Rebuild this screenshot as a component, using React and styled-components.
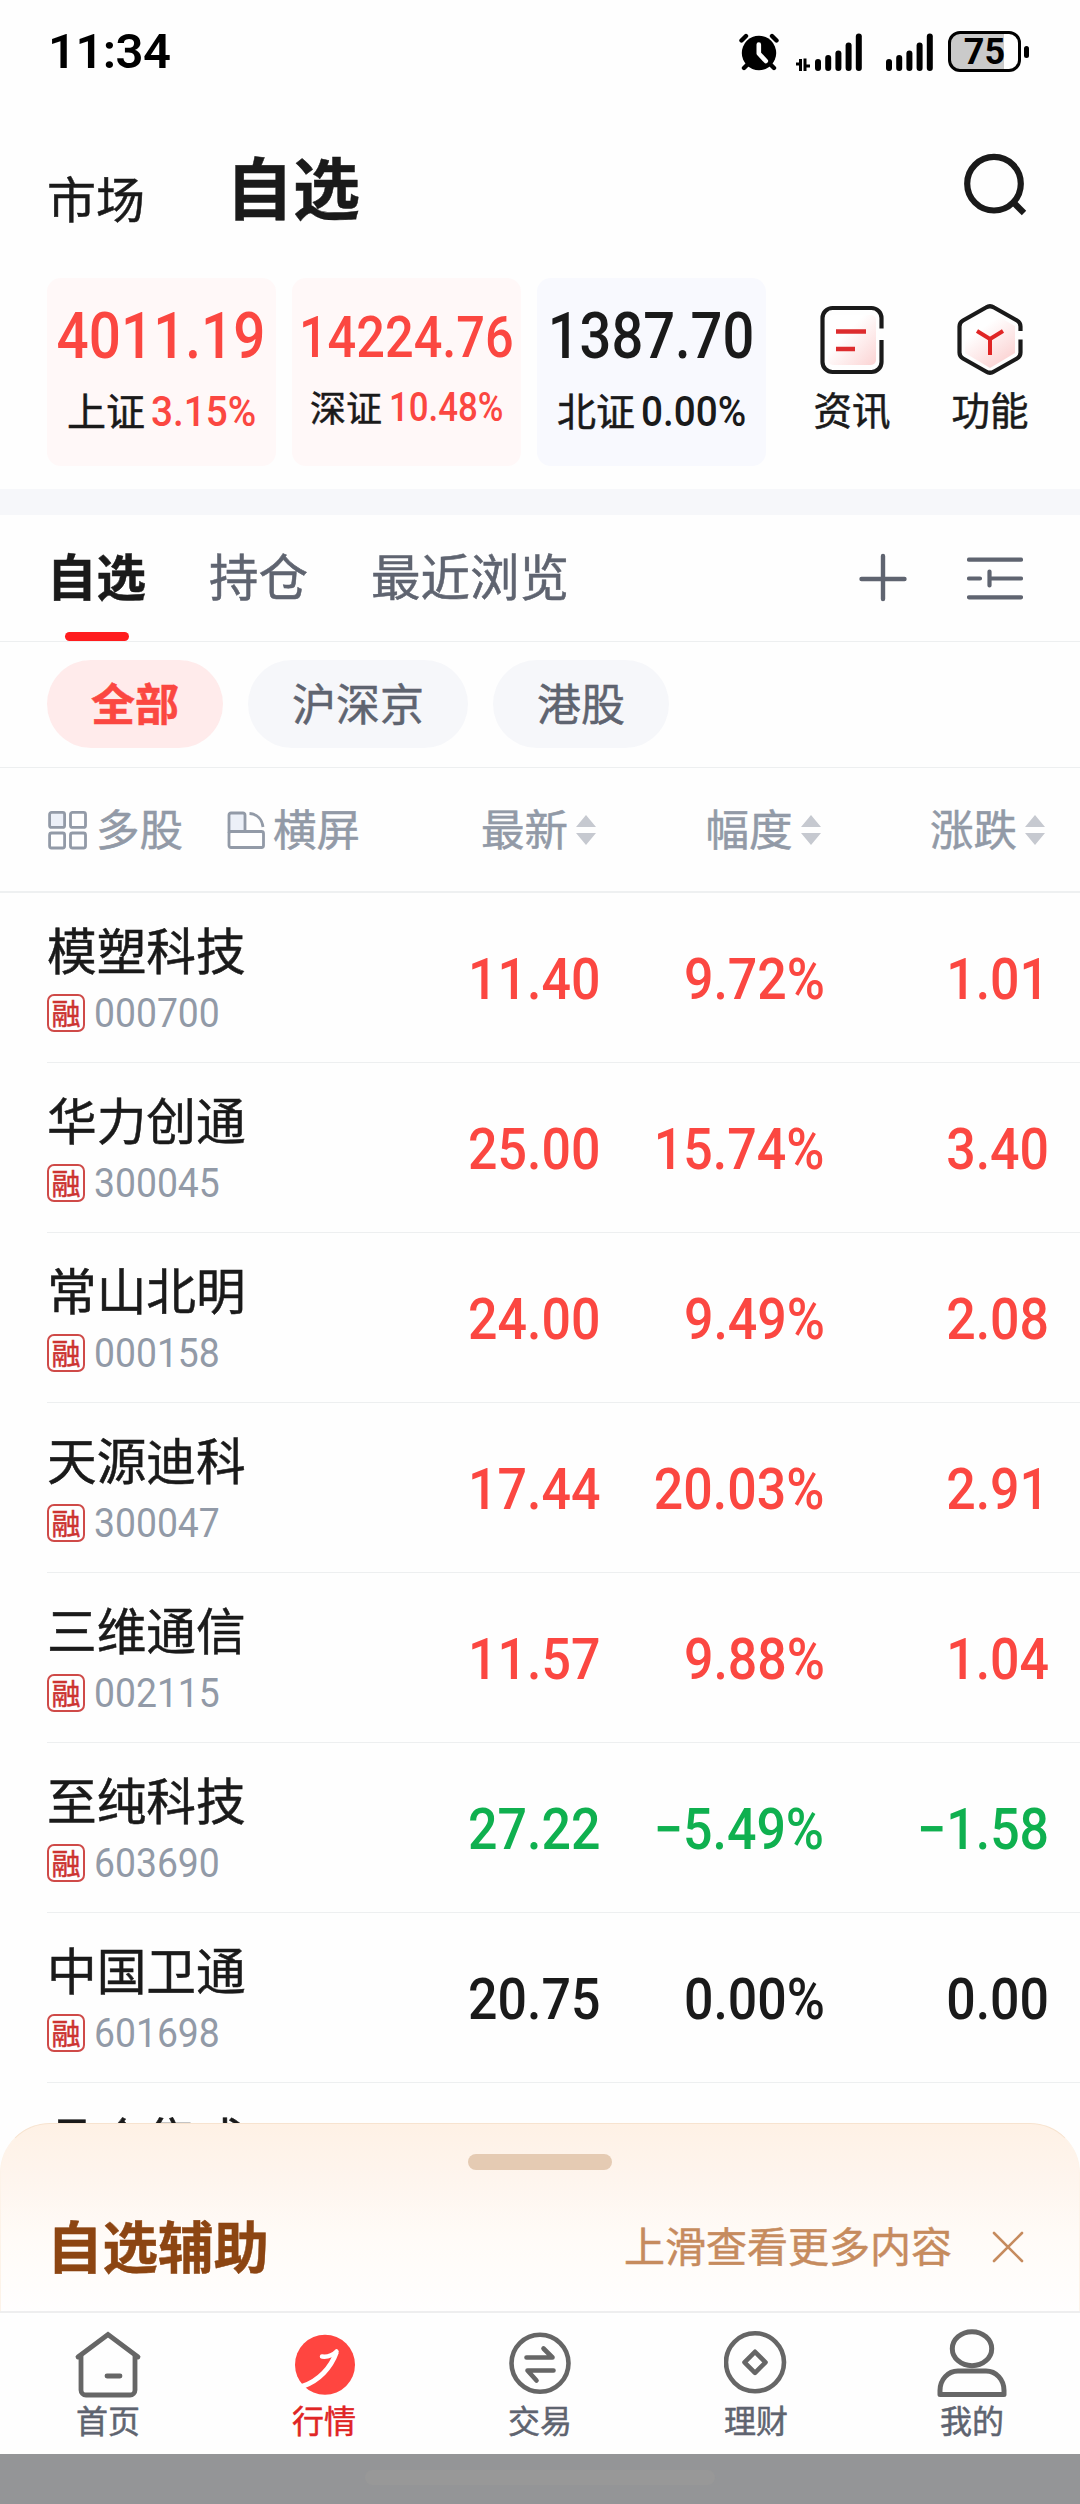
import React, { useState } from 'react';
import styled, { createGlobalStyle, css } from 'styled-components';

const GlobalStyle = createGlobalStyle`
  * {
    box-sizing: border-box;
  }

  body {
    margin: 0;
    background: #fefefe;
    font-family: Roboto, 'Noto Sans CJK SC', sans-serif;
  }

  svg {
    display: block;
    flex: none;
  }
`;

const colors = {
  ink: '#1a1a1a',
  text: '#5f6470',
  muted: '#929aa7',
  line: '#edeff0',
  up: '#fb4741',
  down: '#0fb04f',
  flat: '#1a1a1a',
  red: '#e02525',
  icon: '#666666',
};

const Screen = styled.div`
  display: flex;
  flex-direction: column;
  width: 1080px;
  height: 2504px;
  overflow: hidden;
  background: #fefefe;
  color: ${colors.ink};
`;

// Narrow numerals: the glyphs are squeezed from one side of the box
const Figure = styled.span`
  display: inline-block;
  font-family: Roboto, sans-serif;
  font-size: ${({ $size }) => $size}px;
  font-weight: ${({ $weight }) => $weight || 500};
  line-height: 1;
  white-space: nowrap;
  color: ${({ $color }) => $color || 'inherit'};
  transform: scaleX(${({ $squeeze }) => $squeeze || 0.91});
  transform-origin: ${({ $origin }) => $origin || 'left'} center;
`;

// CJK glyphs sit low in a line-height of 1, so lift them a little
const Cjk = styled.span`
  font-family: 'Noto Sans CJK SC', sans-serif;
  line-height: 1;
  white-space: nowrap;
  transform: translateY(-0.045em);
  -webkit-text-stroke: 0.5px currentColor;
`;

/* ---------- status bar ---------- */

const StatusBar = styled.div`
  display: flex;
  align-items: flex-start;
  height: 104px;
  padding: 0 51px 0 48px;
  color: #000;
`;

const Clock = styled.span`
  flex: 1;
  padding-top: 27px;
  font-size: 49px;
  font-weight: 600;
  line-height: 1;
  letter-spacing: -0.6px;
`;

const StatusIcons = styled.div`
  display: flex;
  padding-top: 31px;
`;

const SignalGap = styled.div`
  width: ${({ $wide }) => ($wide ? 24 : 16)}px;
`;

const Battery = styled.div`
  display: flex;
  align-items: center;
  margin-left: 15px;
`;

const BatteryCase = styled.div`
  display: flex;
  align-items: center;
  justify-content: center;
  width: 73px;
  height: 41px;
  border: 3px solid #000;
  border-radius: 12px;
  background: linear-gradient(90deg, #cacaca 53px, #fefefe 53px);
  font-size: 36px;
  font-weight: 700;
  line-height: 1;
`;

const BatteryTip = styled.div`
  width: 5px;
  height: 12px;
  margin-left: 3px;
  border-radius: 3px;
  background: #000;
`;

/* ---------- page header ---------- */

const PageHeader = styled.header`
  display: flex;
  align-items: flex-start;
  height: 174px;
  padding: 0 50px 0 47px;
`;

const PageTab = styled(Cjk)`
  font-size: ${({ $active }) => ($active ? 67 : 49)}px;
  font-weight: ${({ $active }) => ($active ? 700 : 400)};
  margin-top: ${({ $active }) => ($active ? 50 : 70)}px;
  margin-right: ${({ $active }) => ($active ? 'auto' : '81px')};
`;

const SearchButton = styled.div`
  padding-top: 48px;
`;

/* ---------- indices ---------- */

const IndexStrip = styled.section`
  display: flex;
  height: 211px;
  padding-left: 47px;
`;

const IndexCard = styled.div`
  display: flex;
  flex-direction: column;
  align-items: center;
  width: 229px;
  height: 188px;
  margin-right: 16px;
  border-radius: 14px;
  background: ${({ $tone }) => ($tone === 'up' ? '#fff8f8' : '#f8f9fe')};
`;

const IndexValue = styled.div`
  display: flex;
  justify-content: center;
  align-items: center;
  height: 60px;
  width: 100%;
  margin-top: 29px;
`;

const IndexMeta = styled.div`
  display: flex;
  justify-content: flex-start;
  align-items: center;
  height: 44px;
  width: 100%;
  margin-top: ${({ $compact }) => ($compact ? 19 : 22)}px;
  padding-left: ${({ $compact }) => ($compact ? 18 : 20)}px;
  font-size: ${({ $compact }) => ($compact ? 36 : 39)}px;
  gap: ${({ $compact }) => ($compact ? 7 : 6)}px;
`;

const Shortcut = styled.div`
  display: flex;
  flex-direction: column;
  align-items: center;
  width: 78px;
  margin-left: ${({ $first }) => ($first ? 31 : 60)}px;
  padding-top: 25px;
  font-size: 38.5px;

  span {
    margin-top: 16px;
  }
`;

const Band = styled.div`
  height: 26px;
  background: #f6f7fa;
`;

/* ---------- watchlist tabs and filters ---------- */

const TabBar = styled.nav`
  display: flex;
  align-items: flex-start;
  height: 127px;
  padding: 0 57px 0 47px;
  border-bottom: 1px solid ${colors.line};
`;

const Tab = styled.div`
  display: flex;
  flex-direction: column;
  align-items: center;
  height: 126px;
  margin-right: 63px;
  padding-top: 37px;
  font-size: 49.5px;
  font-weight: ${({ $active }) => ($active ? 700 : 400)};
  color: ${({ $active }) => ($active ? colors.ink : colors.text)};

  &::after {
    content: '';
    width: 64px;
    height: 9px;
    margin-top: auto;
    border-radius: 5px;
    background: ${({ $active }) => ($active ? '#ff1c1e' : 'transparent')};
  }
`;

const TabTools = styled.div`
  display: flex;
  gap: 60px;
  margin-left: auto;
  padding-top: 38px;
`;

const FilterBar = styled.div`
  display: flex;
  gap: 25px;
  height: 126px;
  padding: 18px 47px 0;
  border-bottom: 1px solid ${colors.line};
`;

const Pill = styled.div`
  display: flex;
  align-items: center;
  height: 88px;
  padding: 0 44px;
  border-radius: 44px;
  font-size: 44px;
  background: #f6f7fa;
  color: ${colors.text};

  ${({ $active }) => $active && css`
    background: #ffebeb;
    color: ${colors.up};
    font-weight: 700;
  `}
`;

/* ---------- quote table ---------- */

const TableHead = styled.div`
  display: flex;
  justify-content: space-between;
  align-items: center;
  height: 125px;
  padding: 0 35px 0 47px;
  border-bottom: 2px solid #eef0f1;
  font-size: 43.5px;
  color: ${colors.muted};
`;

const ViewModes = styled.div`
  display: flex;
  gap: 43px;
`;

const ViewMode = styled.div`
  display: flex;
  align-items: center;
  gap: 7px;
`;

const SortHeads = styled.div`
  display: grid;
  grid-template-columns: repeat(3, 224.5px);
  margin-left: -224px;
`;

const SortHead = styled.div`
  display: flex;
  justify-content: flex-end;
  align-items: center;
  gap: 8px;
`;

const QuoteList = styled.div`
  height: 1290px;
  overflow: hidden;
`;

const QuoteRow = styled.div`
  display: grid;
  grid-template-columns: 1fr repeat(3, 224.5px);
  height: 170px;
  margin-left: 47px;
  padding-right: 31px;
  border-bottom: 1px solid ${colors.line};
`;

const Stock = styled.div`
  display: flex;
  flex-direction: column;
  padding-top: 33px;
  font-size: 49.7px;
`;

const StockMeta = styled.div`
  display: flex;
  align-items: center;
  gap: 9px;
  margin-top: 17px;
  color: ${colors.muted};
`;

const MarginBadge = styled.div`
  display: flex;
  align-items: center;
  justify-content: center;
  width: 38px;
  height: 38px;
  border: 2px solid #cf4a48;
  border-radius: 7px;
  font-size: 29px;
  color: #cc3330;
`;

const Cell = styled.div`
  padding-top: 58px;
  text-align: right;
  color: ${({ $trend }) => colors[$trend]};
`;

/* ---------- bottom sheet ---------- */

const Sheet = styled.section`
  position: relative;
  display: flex;
  flex-direction: column;
  align-items: center;
  height: 188px;
  margin-top: -60px;
  border: 1px solid #fdf3e9;
  border-top-color: #f7e3cf;
  border-bottom: 0;
  border-radius: 50px 50px 0 0;
  background: linear-gradient(#fef1e5, #fef5ee 30%, #fffbf7 60%, #fffefe);
`;

const Handle = styled.div`
  width: 144px;
  height: 16px;
  margin-top: 30px;
  border-radius: 8px;
  background: #e5cbb3;
`;

const SheetRow = styled.div`
  display: flex;
  align-items: center;
  width: 100%;
  margin-top: 49px;
  padding: 0 55px 0 46px;
`;

const SheetTitle = styled(Cjk)`
  font-size: 55.5px;
  font-weight: 700;
  color: #8c4512;
`;

const SheetHint = styled(Cjk)`
  margin-left: auto;
  margin-right: 40px;
  font-size: 41px;
  color: #c68b5e;
`;

/* ---------- navigation ---------- */

const NavBar = styled.nav`
  position: relative;
  display: grid;
  grid-template-columns: repeat(5, 1fr);
  height: 143px;
  border-top: 2px solid #eeeeef;
  background: #fefefe;
`;

const NavItem = styled.div`
  display: flex;
  flex-direction: column;
  align-items: center;
  padding-top: 15px;
  font-size: 32px;
  color: ${({ $active }) => ($active ? colors.red : colors.text)};

  span {
    margin-top: 6px;
  }
`;

const GestureBar = styled.div`
  display: flex;
  justify-content: center;
  height: 50px;
  padding-top: 16px;
  background: #949597;

  &::after {
    content: '';
    width: 350px;
    height: 15px;
    border-radius: 8px;
    background: #989898;
  }
`;

/* ---------- icons ---------- */

const AlarmIcon = () => (
  <svg width="40" height="41" viewBox="0 0 40 41" fill="none" strokeLinecap="round">
    <circle cx="20" cy="22" r="17.2" fill="#000" />
    <path d="M2.5 9.5 7 5M37.5 9.5 33 5" stroke="#000" strokeWidth="4.4" />
    <path d="m9 33-4 4M31 33l4 4" stroke="#000" strokeWidth="4.4" />
    <path d="M19.8 13.5v9l7 7.5" stroke="#fff" strokeWidth="4.6" strokeLinejoin="round" />
  </svg>
);

const BAR_TOPS = [28, 24, 19.5, 11.5, 2.5];

const SignalIcon = ({ data }) => (
  <svg width={data ? 67 : 47} height="41" viewBox={data ? '-20 0 67 41' : '0 0 47 41'}>
    {BAR_TOPS.map((top, i) => (
      <rect key={top} x={i * 10.2} y={top} width="6" height={40 - top} rx="3" />
    ))}
    {data && (
      <path
        d="M-19 33h4.500M-14.500 28v12M-10 27.500V40M-10 35h5"
        fill="none"
        stroke="#000"
        strokeWidth="3"
      />
    )}
  </svg>
);

const SearchIcon = () => (
  <svg width="66" height="66" viewBox="0 0 66 66" fill="none" stroke={colors.ink} strokeWidth="6.2">
    <circle cx="30" cy="31.7" r="26.8" />
    <path d="m49.5 50.5 10.5 10.5" />
  </svg>
);

const NewsIcon = () => (
  <svg width="64" height="72" viewBox="0 0 64 72" fill="none">
    <defs>
      <linearGradient id="newsFill" x1="0.3" y1="0.3" x2="1" y2="1">
        <stop offset="0.1" stopColor="#fff" />
        <stop offset="1" stopColor="#fbd3d3" />
      </linearGradient>
    </defs>
    <rect x="8" y="12" width="48" height="50" rx="5" fill="url(#newsFill)" />
    <path
      d="M61.5 25.5V15a10 10 0 0 0-10-10h-39a10 10 0 0 0-10 10v44a10 10 0 0 0 10 10h39a10 10 0 0 0 10-10V37"
      stroke={colors.ink}
      strokeWidth="4.2"
    />
    <path d="M16 28.5h30M16 46h19" stroke="#dd2c2e" strokeWidth="4.6" />
  </svg>
);

const FeatureIcon = () => (
  <svg width="68" height="72" viewBox="0 0 68 72" fill="none" strokeLinejoin="round">
    <defs>
      <linearGradient id="featureFill" x1="0.3" y1="0.2" x2="0.8" y2="1">
        <stop offset="0.1" stopColor="#fff" />
        <stop offset="1" stopColor="#fbcfcf" />
      </linearGradient>
    </defs>
    <path d="M34 9 59 23v27L34 65 9 50V23Z" fill="url(#featureFill)" />
    <path
      d="M64.5 28v-4.5q0-4-3.5-6L38 4.500q-4-2.500-8 0L7 17.500q-3.500 2-3.500 6v26q0 4 3.500 6l23 13q4 2.500 8 0l23-13q3.500-2 3.500-6V36.500"
      stroke={colors.ink}
      strokeWidth="4.2"
    />
    <path d="m21 28 13 8 13-8M34 36v16" stroke="#e02525" strokeWidth="4" />
  </svg>
);

const PlusIcon = () => (
  <svg width="48" height="50" viewBox="0 0 48 50" stroke={colors.text} strokeWidth="4.4" strokeLinecap="round">
    <path d="M24 3v43M2.500 26h43" />
  </svg>
);

const ManageIcon = () => (
  <svg width="56" height="50" viewBox="0 0 56 50" stroke={colors.text} strokeWidth="4.2" strokeLinecap="round">
    <path d="M2 6.700h52M2 25.500h11M22.500 18.500v14M22.500 25.500h31.500M2 44.300h52" />
  </svg>
);

const GridIcon = () => (
  <svg width="42" height="42" viewBox="0 0 42 42" fill="none" stroke={colors.muted} strokeWidth="2.8">
    <rect x="2.6" y="3.4" width="15" height="15" rx="2" fill="#ecf0f8" />
    <rect x="23.5" y="3.4" width="15" height="15" rx="2" />
    <rect x="2.6" y="24" width="15" height="15" rx="2" />
    <rect x="23.5" y="24" width="15" height="15" rx="2" />
  </svg>
);

const RotateIcon = () => (
  <svg width="40" height="42" viewBox="0 0 40 42" fill="none" stroke={colors.muted} strokeWidth="2.8">
    <path d="M19 22.500V6a2 2 0 0 0-2-2H5a2 2 0 0 0-2 2v16.500Z" fill="#ecf0f8" />
    <rect x="3" y="22.5" width="34.5" height="16" rx="2" />
    <path d="M23.500 4.500c8 .5 12.500 6.500 13.500 13.500" />
  </svg>
);

const SortIcon = () => (
  <svg width="20" height="32" viewBox="0 0 20 32" fill="#c6c9d0">
    <path d="M10 1 20 13H0ZM10 31 20 19H0Z" />
  </svg>
);

const CloseIcon = () => (
  <svg width="32" height="32" viewBox="0 0 32 32" stroke="#c68b5e" strokeWidth="2.6" strokeLinecap="round">
    <path d="m2 2 28 28M30 2 2 30" />
  </svg>
);

const HomeIcon = () => (
  <svg width="68" height="70" viewBox="0 0 68 70" fill="none" stroke={colors.icon} strokeWidth="4.8">
    <path d="M4 29 34 6.500 64 29" strokeLinecap="round" />
    <path d="M7 28v34a5 5 0 0 0 5 5h44a5 5 0 0 0 5-5V28" />
    <path d="M33 48h13" strokeLinecap="round" />
  </svg>
);

const MarketIcon = () => (
  <svg width="64" height="70" viewBox="0 0 64 70" fill="none">
    <circle cx="33" cy="36.8" r="30" fill="#ff4540" />
    <path d="M10 58.500c17-5.500 29-19 34.500-34.500" stroke="#fff" strokeWidth="5" />
    <path
      d="M30 28.500q8.500 1 14.500-5"
      stroke="#fff"
      strokeWidth="4.5"
      strokeLinecap="round"
    />
  </svg>
);

const TradeIcon = () => (
  <svg width="64" height="70" viewBox="0 0 64 70" fill="none" stroke={colors.icon} strokeWidth="4.6">
    <circle cx="32" cy="35.2" r="28.5" />
    <path d="M18.500 29.500h26l-9-9M45.500 42.500h-26l9 10" strokeLinecap="round" strokeLinejoin="round" />
  </svg>
);

const WealthIcon = () => (
  <svg width="64" height="70" viewBox="0 0 64 70" fill="none" stroke={colors.icon} strokeWidth="4.6">
    <circle cx="31" cy="34.3" r="29" />
    <path d="M31 23.800 41.500 34.300 31 44.800 20.500 34.300Z" strokeLinejoin="round" />
  </svg>
);

const UserIcon = () => (
  <svg width="72" height="70" viewBox="0 0 72 70" fill="none" stroke={colors.icon} strokeWidth="5">
    <ellipse cx="36" cy="20.7" rx="19.7" ry="17" />
    <path d="M4 66.500v-4C4 51.500 12 43 22 43h28c10 0 18 8.500 18 19.500v4Z" strokeLinejoin="round" />
  </svg>
);

/* ---------- data ---------- */

const INDICES = [
  { name: '上证', value: '4011.19', change: '3.15%', tone: 'up', size: 64, squeeze: 0.885 },
  { name: '深证', value: '14224.76', change: '10.48%', tone: 'up', size: 57, squeeze: 0.885, compact: true },
  { name: '北证', value: '1387.70', change: '0.00%', tone: 'flat', size: 64, squeeze: 0.875 },
];

const TABS = ['自选', '持仓', '最近浏览'];
const FILTERS = ['全部', '沪深京', '港股'];
const SORTS = ['最新', '幅度', '涨跌'];

const QUOTES = [
  { name: '模塑科技', code: '000700', last: '11.40', pct: '9.72%', diff: '1.01', trend: 'up' },
  { name: '华力创通', code: '300045', last: '25.00', pct: '15.74%', diff: '3.40', trend: 'up' },
  { name: '常山北明', code: '000158', last: '24.00', pct: '9.49%', diff: '2.08', trend: 'up' },
  { name: '天源迪科', code: '300047', last: '17.44', pct: '20.03%', diff: '2.91', trend: 'up' },
  { name: '三维通信', code: '002115', last: '11.57', pct: '9.88%', diff: '1.04', trend: 'up' },
  { name: '至纯科技', code: '603690', last: '27.22', pct: '−5.49%', diff: '−1.58', trend: 'down' },
  { name: '中国卫通', code: '601698', last: '20.75', pct: '0.00%', diff: '0.00', trend: 'flat' },
  { name: '晶合集成' },
];

const NAV = [
  { label: '首页', Icon: HomeIcon },
  { label: '行情', Icon: MarketIcon },
  { label: '交易', Icon: TradeIcon },
  { label: '理财', Icon: WealthIcon },
  { label: '我的', Icon: UserIcon },
];

const Quote = ({ name, code, last, pct, diff, trend }) => (
  <QuoteRow>
    <Stock>
      <Cjk>{name}</Cjk>
      {code && (
        <StockMeta>
          <MarginBadge><Cjk>融</Cjk></MarginBadge>
          <Figure $size={41} $weight={400}>{code}</Figure>
        </StockMeta>
      )}
    </Stock>
    {code && [last, pct, diff].map((value, i) => (
      <Cell key={i} $trend={trend}>
        <Figure $size={57} $origin="right">{value}</Figure>
      </Cell>
    ))}
  </QuoteRow>
);

const App = () => {
  const [tab, setTab] = useState('自选');
  const [filter, setFilter] = useState('全部');
  const [nav, setNav] = useState('行情');

  return (
    <Screen>
      <GlobalStyle />

      <StatusBar>
        <Clock>11:34</Clock>
        <StatusIcons>
          <AlarmIcon />
          <SignalGap />
          <SignalIcon data />
          <SignalGap $wide />
          <SignalIcon />
          <Battery>
            <BatteryCase>75</BatteryCase>
            <BatteryTip />
          </Battery>
        </StatusIcons>
      </StatusBar>

      <PageHeader>
        <PageTab>市场</PageTab>
        <PageTab $active>自选</PageTab>
        <SearchButton><SearchIcon /></SearchButton>
      </PageHeader>

      <IndexStrip>
        {INDICES.map(({ name, value, change, tone, size, squeeze, compact }) => (
          <IndexCard key={name} $tone={tone}>
            <IndexValue>
              <Figure $size={size} $squeeze={squeeze} $origin="center" $color={colors[tone]}>
                {value}
              </Figure>
            </IndexValue>
            <IndexMeta $compact={compact}>
              <Cjk>{name}</Cjk>
              <Figure $size={compact ? 40 : 43} $squeeze={compact ? 0.87 : 0.9} $color={colors[tone]}>
                {change}
              </Figure>
            </IndexMeta>
          </IndexCard>
        ))}
        <Shortcut $first>
          <NewsIcon />
          <Cjk>资讯</Cjk>
        </Shortcut>
        <Shortcut>
          <FeatureIcon />
          <Cjk>功能</Cjk>
        </Shortcut>
      </IndexStrip>

      <Band />

      <TabBar>
        {TABS.map((name) => (
          <Tab key={name} $active={name === tab} onClick={() => setTab(name)}>
            <Cjk>{name}</Cjk>
          </Tab>
        ))}
        <TabTools>
          <PlusIcon />
          <ManageIcon />
        </TabTools>
      </TabBar>

      <FilterBar>
        {FILTERS.map((name) => (
          <Pill key={name} $active={name === filter} onClick={() => setFilter(name)}>
            <Cjk>{name}</Cjk>
          </Pill>
        ))}
      </FilterBar>

      <TableHead>
        <ViewModes>
          <ViewMode><GridIcon /><Cjk>多股</Cjk></ViewMode>
          <ViewMode><RotateIcon /><Cjk>横屏</Cjk></ViewMode>
        </ViewModes>
        <SortHeads>
          {SORTS.map((name) => (
            <SortHead key={name}>
              <Cjk>{name}</Cjk>
              <SortIcon />
            </SortHead>
          ))}
        </SortHeads>
      </TableHead>

      <QuoteList>
        {QUOTES.map((quote) => <Quote key={quote.name} {...quote} />)}
      </QuoteList>

      <Sheet>
        <Handle />
        <SheetRow>
          <SheetTitle>自选辅助</SheetTitle>
          <SheetHint>上滑查看更多内容</SheetHint>
          <CloseIcon />
        </SheetRow>
      </Sheet>

      <NavBar>
        {NAV.map(({ label, Icon }) => (
          <NavItem key={label} $active={label === nav} onClick={() => setNav(label)}>
            <Icon />
            <Cjk>{label}</Cjk>
          </NavItem>
        ))}
      </NavBar>
      <GestureBar />
    </Screen>
  );
};

export default App;
